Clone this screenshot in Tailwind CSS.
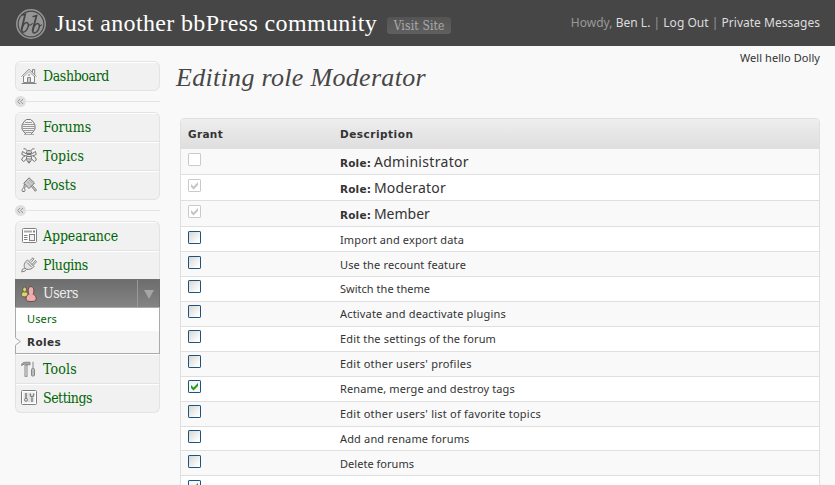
<!DOCTYPE html>
<html lang="en">
<head>
<meta charset="utf-8">
<title>Editing role Moderator</title>
<script src="https://cdn.jsdelivr.net/npm/@tailwindcss/browser@4"></script>
</head>
<body class="h-[485px] overflow-hidden bg-[#f9f9f9] text-[#333] font-['Noto_Sans',sans-serif] text-[11px]">
<svg class="absolute size-0">
  <defs>
    <linearGradient id="g" x1="0" y1="0" x2="1" y2="1"><stop offset="0.1" stop-color="#d9d9d5"/><stop offset="0.8" stop-color="#fdfdfd"/></linearGradient>
    <symbol id="off" viewBox="0 0 13 13"><rect x=".5" y=".5" width="12" height="12" rx=".6" fill="url(#g)" stroke="#1c5180"/></symbol>
    <symbol id="on" viewBox="0 0 13 13"><rect x=".5" y=".5" width="12" height="12" rx=".6" fill="#f6f6f4" stroke="#1c5180"/><path d="M3 5v3l2.500 2.500L10 6V3L5.500 7.500z" fill="#21a121"/></symbol>
    <symbol id="dis" viewBox="0 0 13 13"><rect x=".5" y=".5" width="12" height="12" rx=".6" fill="#fff" stroke="#cacac8"/></symbol>
    <symbol id="dison" viewBox="0 0 13 13"><rect x=".5" y=".5" width="12" height="12" rx=".6" fill="#fff" stroke="#cacac8"/><path d="M3 5v3l2.500 2.500L10 6V3L5.500 7.500z" fill="#c5c5c3"/></symbol>
  </defs>
</svg>

<header class="flex h-[46px] items-center bg-[#464646] pl-4 pr-[15px]">
  <svg class="mt-[2px] size-[30px] shrink-0" viewBox="0 0 30 30"><circle cx="15" cy="15" r="14.200" fill="none" stroke="#969696" stroke-width="1.500"/><circle cx="15" cy="15" r="12.300" fill="#969696"/><g fill="none" stroke="#464646" stroke-linecap="round"><path d="M6 6l3.200-.8L5.600 20.500" stroke-width="1.800"/><path d="M5.700 20.500c1.500-7.500 6.500-8.500 6.700-4.800.2 3.300-2.700 7.500-5.100 7.500-1.100 0-1.600-1.200-1.600-2.700" stroke-width="1.500"/><path d="M17.300 7.500l3.200-.8L16.600 21.500" stroke-width="1.800"/><path d="M16.700 21.500c1.500-7.500 6.500-8.500 6.700-4.800.2 3.300-2.700 7.300-5.100 7.300-1.100 0-1.600-1.100-1.600-2.500" stroke-width="1.500"/><path d="M12.500 15.800c1.200.6 2.500.2 3.800-1.200M23.600 16.500c.8.300 1.400 0 2-.6" stroke-width="1.100"/></g></svg>
  <h1 class="ml-[9px] whitespace-nowrap font-['Liberation_Serif',serif] text-[24px] leading-[30px] tracking-[.36px] text-white">Just another bbPress community</h1>
  <a class="ml-[10px] mt-[5px] flex h-[17px] w-16 items-center justify-center whitespace-nowrap rounded-[3px] bg-gradient-to-b from-[#545454] to-[#606060] font-['DejaVu_Serif_Condensed','DejaVu_Serif',serif] text-[12px] tracking-[.16px] text-[#aaa]">Visit Site</a>
  <p class="ml-auto whitespace-nowrap text-[12px] leading-[18px] tracking-[.02px] text-[#999]">Howdy, <a class="text-[#ddd]">Ben L.</a> | <a class="text-[#ddd]">Log Out</a> | <a class="text-[#ddd]">Private Messages</a></p>
</header>

<div class="flex">
  <nav class="ml-[15px] mt-[15px] w-[145px] shrink-0 font-['DejaVu_Serif_Condensed','DejaVu_Serif',serif] text-[14px] text-[#006505]">
    <div class="overflow-hidden rounded-[6px] border border-[#e3e3e3] bg-[#f1f1f1]">
      <a class="flex h-7 items-center gap-[6px] border-t border-white pl-[5px]"><svg class="mb-px size-4" viewBox="0 0 16 16" fill="none" stroke="#888"><path d="M.7 8.500L8 1.200l7.300 7.300"/><path d="M2.500 8v6.500h11V8" fill="#f8f8f8"/><path d="M3 8.200L8 3.500l5 4.700" stroke="#aaa"/><path d="M11.500 4.500V1.500h2.200v5.200M.5 15.500h15"/><path d="M6.500 14.500v-5h3v5z" fill="#ccc"/><path d="M7.300 7h1.400" stroke-width="1.500"/></svg><span class="tracking-[-.38px]">Dashboard</span></a>
    </div>
    <div class="flex h-[21px] items-center"><svg class="size-[11px]" viewBox="0 0 11 11"><circle cx="5.500" cy="5.500" r="5.500" fill="#dfdfdf"/><path d="M5 3L2.700 5.500 5 8M8 3L5.700 5.500 8 8" fill="none" stroke="#999"/></svg><span class="h-px grow bg-[#e3e3e3]"></span></div>
    <div class="overflow-hidden rounded-[6px] border border-[#e3e3e3] bg-[#f1f1f1]">
      <a class="flex h-7 items-center gap-[6px] border-t border-white pl-[5px]"><svg class="mb-px size-4" viewBox="0 0 16 16" fill="none" stroke="#777"><path d="M5.500 .5h4l2.500 2 2 3.500v4l-2 3-2.500 2.500h-4L3 13 1 10V6l2-3.500z" fill="#f3f3f3"/><path d="M4 3.500h7M2 5.500h11M1 7.500h13M1.500 9.500h12M2.500 11.500h10M4.500 13.500h6" stroke="#999"/><path d="M3 15.500h10" stroke="#aaa"/></svg><span>Forums</span></a>
      <a class="flex h-[29px] items-center gap-[6px] border-t border-[#e3e3e3] pl-[5px] shadow-[inset_0_1px_0_#fff]"><svg class="mb-px size-4" viewBox="0 0 16 16" fill="none" stroke="#777"><path d="M2.500 .8h2l1.500 2M13.500 .8h-2L10 2.800"/><path d="M5.500 5.500V3.800C6.500 2 9.500 2 10.500 3.800v1.700z" fill="#ccc"/><path d="M5.500 6L1.500 3.500.8 6.500 4 7.800M10.500 6l4-2.500.7 3L12 7.800"/><path d="M5 7.500L1.500 9.500.7 12l2 1.500L5.500 11M11 7.500l3.500 2 .8 2.500-2 1.500L10.500 11"/><path d="M6 6.500h4l.7 5L8 15.300 5.300 11.500z" fill="#eee"/><path d="M6 8.500h4M5.500 11h5M6.500 13.300h3" stroke-width="1.100"/></svg><span class="tracking-[.08px]">Topics</span></a>
      <a class="flex h-[29px] items-center gap-[6px] border-t border-[#e3e3e3] pl-[5px] shadow-[inset_0_1px_0_#fff]"><svg class="mb-px size-4" viewBox="0 0 16 16" fill="none" stroke="#777"><path d="M8 .8L13.500 6 8 11.500 2.800 6.200z" fill="#ccc"/><path d="M6 4.500l4 4M8 3l3.500 3.500" stroke="#aaa"/><path d="M10.300 9.300l4 5 1.200-1.200-4-4.600z" fill="#ddd"/><path d="M3.500 7L2.800 10.500c-1.500 1-2.300 3-1.300 4h2c1-1.200.3-2.700-.3-3.500L5.500 9"/></svg><span class="tracking-[-.09px]">Posts</span></a>
    </div>
    <div class="flex h-[21px] items-center"><svg class="size-[11px]" viewBox="0 0 11 11"><circle cx="5.500" cy="5.500" r="5.500" fill="#dfdfdf"/><path d="M5 3L2.700 5.500 5 8M8 3L5.700 5.500 8 8" fill="none" stroke="#999"/></svg><span class="h-px grow bg-[#e3e3e3]"></span></div>
    <div class="overflow-hidden rounded-t-[6px] border border-b-0 border-[#e3e3e3] bg-[#f1f1f1]">
      <a class="flex h-7 items-center gap-[6px] border-t border-white pl-[5px]"><svg class="mb-px size-4" viewBox="0 0 16 16" fill="none" stroke="#808080"><rect x="1.500" y=".5" width="14" height="14" rx="1" fill="#fff"/><path d="M3 3.500h8" stroke-width="2" stroke="#aaa"/><path d="M12 3.500h2" stroke-width="2" stroke="#808080"/><path d="M3 7.500h3.500M3 9.500h3.500M3 11.500h3.500"/><rect x="8.500" y="6.500" width="5" height="6" fill="#f1f1f1"/></svg><span class="tracking-[-.13px]">Appearance</span></a>
      <a class="flex h-[29px] items-center gap-[6px] border-t border-[#e3e3e3] pl-[5px] shadow-[inset_0_1px_0_#fff]"><svg class="mb-px size-4" viewBox="0 0 16 16" fill="none" stroke="#808080"><path d="M6.500 3l6.500 6.500c-1.500 2.500-5 3.500-8 2.500L3.500 10.500C2.500 7.500 4 4.500 6.500 3z" fill="#e5e5e5"/><path d="M8.500 4L12 .8l1 1-3 3.700M11 7.500l3.500-4 1 1.200-3.500 4M4 11L1.200 12.500.8 15M5.500 12.300L4 14l-3.200 1M6 5.500l4.500 4.500"/></svg><span class="tracking-[-.33px]">Plugins</span></a>
    </div>
    <a class="flex h-7 items-center border-x border-t border-[#707070] bg-gradient-to-b from-[#6d6d6d] to-[#848484] pl-[5px] text-white"><svg class="mr-[6px] size-4" viewBox="0 0 16 16"><g fill="#d9d27a" stroke="#5c5423" stroke-width=".8"><path d="M.5 8.500C.5 6.300 1.700 5.600 3.500 5.600s3.500.7 3.500 2.900-1.500 2.300-3.500 2.300S.5 10.500.5 8.500z"/><ellipse cx="3.600" cy="3.600" rx="1.900" ry="2.500"/></g><path d="M5 12.800c0-3 1.700-5 5-5s5.200 2 5.200 5c0 2.200-2 2.700-5.200 2.700s-5-.5-5-2.700z" fill="#e8b0b0" stroke="#6b3430" stroke-width=".8"/><ellipse cx="10" cy="4.700" rx="2.800" ry="4.100" fill="#e8b0b0" stroke="#6b3430" stroke-width=".8"/><path d="M8.300 7.200h3.400v2.500H8.300z" fill="#e8b0b0"/></svg><span class="tracking-[-.4px] text-[#eee]">Users</span><span class="ml-auto flex h-full w-[22px] items-center justify-center border-l border-[#999]"><svg class="mt-[2px] h-[9px] w-[10px]" viewBox="0 0 10 9"><path d="M0 0h10L5 9z" fill="#a5a5a5"/></svg></span></a>
    <div class="relative border border-[#aaa] bg-white font-['Noto_Sans',sans-serif] text-[11px]">
      <a class="flex h-[23px] items-center pl-[11px] tracking-[.13px]">Users</a>
      <a class="flex h-[22px] items-center bg-[#f5f5f5] pl-[11px] pt-[2px] font-['DejaVu_Sans',sans-serif] text-[10.5px] font-bold tracking-[.34px] text-[#333]">Roles</a>
      <svg class="absolute -left-px top-[29px] h-[9px] w-[7px]" viewBox="0 0 7 9"><path d="M0 .5L6 4.500 0 8.500z" fill="#f9f9f9"/><path d="M.5 1l5 3.500L.5 8" fill="none" stroke="#aaa"/></svg>
    </div>
    <div class="overflow-hidden rounded-b-[6px] border border-t-0 border-[#e3e3e3] bg-[#f1f1f1]">
      <a class="flex h-[29px] items-center gap-[6px] border-t border-white pl-[5px]"><svg class="mb-px size-4" viewBox="0 0 16 16" fill="none" stroke="#888"><path d="M.5 4.500c0-2.500 2-3.200 4-3.200h4.500v2.500H6.500L3.500 3z" fill="#aaa"/><rect x="4" y="4" width="2" height="11.300" fill="#eee"/><path d="M12 .8v7"/><rect x="10.500" y="7.500" width="3" height="7.500" rx="1" fill="#bbb"/></svg><span class="tracking-[.2px]">Tools</span></a>
      <a class="flex h-[29px] items-center gap-[6px] border-t border-[#e3e3e3] pl-[5px] shadow-[inset_0_1px_0_#fff]"><svg class="mb-px size-4" viewBox="0 0 16 16" fill="none" stroke="#808080"><rect x=".5" y=".5" width="15" height="14" rx="1" fill="#fff"/><rect x="2.500" y="2.500" width="11" height="10" fill="#e3e3e3" stroke="none"/><path d="M5 3v5M11 7.500v4.500" stroke-width="1.500"/><circle cx="5" cy="9.800" r="1.500"/><path d="M9.300 3.500v1.300c0 2.500 3.400 2.500 3.400 0V3.500" stroke-width="1.300"/></svg><span class="tracking-[-.48px]">Settings</span></a>
    </div>
  </nav>

  <main class="ml-5 w-[640px] shrink-0">
    <p class="flex h-[18px] items-end justify-end whitespace-nowrap leading-[12px] tracking-[.07px]">Well hello Dolly</p>
    <h2 class="-ml-1 h-[54px] whitespace-nowrap font-['Liberation_Serif',serif] text-[26px] italic leading-[28px] tracking-[.31px] text-[#464646]">Editing role Moderator</h2>
    <div class="overflow-hidden rounded-t-[4px] border border-[#dfdfdf] bg-white">
      <div class="flex h-[30px] items-center bg-gradient-to-b from-[#eee] to-[#dedede] pl-[7px] pt-[2px] font-['DejaVu_Sans',sans-serif] text-[10.5px] font-bold"><span class="w-[152px] tracking-[.32px]">Grant</span><span class="tracking-[.5px]">Description</span></div>
      <div class="flex h-[26px] items-start border-b border-[#dfdfdf] bg-[#f9f9f9] pl-[7px] pt-1"><svg class="mr-[139px] size-[13px]"><use href="#dis"/></svg><span class="leading-[18px]"><b class="font-['DejaVu_Sans',sans-serif] text-[10.5px] tracking-[.16px]">Role:</b> <span class="text-[14px] tracking-[.31px]">Administrator</span></span></div>
      <div class="flex h-[26px] items-start border-b border-[#dfdfdf] pl-[7px] pt-1"><svg class="mr-[139px] size-[13px]"><use href="#dison"/></svg><span class="leading-[18px]"><b class="font-['DejaVu_Sans',sans-serif] text-[10.5px] tracking-[.16px]">Role:</b> <span class="text-[14px] tracking-[.18px]">Moderator</span></span></div>
      <div class="flex h-[26px] items-start border-b border-[#dfdfdf] bg-[#f9f9f9] pl-[7px] pt-1"><svg class="mr-[139px] size-[13px]"><use href="#dison"/></svg><span class="leading-[18px]"><b class="font-['DejaVu_Sans',sans-serif] text-[10.5px] tracking-[.16px]">Role:</b> <span class="text-[14px]">Member</span></span></div>
      <div class="flex h-[25px] items-start border-b border-[#dfdfdf] pl-[7px] pt-1"><svg class="mr-[139px] size-[13px]"><use href="#off"/></svg><span class="leading-[18px] tracking-[.13px]">Import and export data</span></div>
      <div class="flex h-[25px] items-start border-b border-[#dfdfdf] bg-[#f9f9f9] pl-[7px] pt-1"><svg class="mr-[139px] size-[13px]"><use href="#off"/></svg><span class="leading-[18px] tracking-[.15px]">Use the recount feature</span></div>
      <div class="flex h-[25px] items-start border-b border-[#dfdfdf] pl-[7px] pt-[3px]"><svg class="mr-[139px] size-[13px]"><use href="#off"/></svg><span class="leading-[18px] tracking-[.02px]">Switch the theme</span></div>
      <div class="flex h-[25px] items-start border-b border-[#dfdfdf] bg-[#f9f9f9] pl-[7px] pt-[3px]"><svg class="mr-[139px] size-[13px]"><use href="#off"/></svg><span class="leading-[18px] tracking-[.17px]">Activate and deactivate plugins</span></div>
      <div class="flex h-[25px] items-start border-b border-[#dfdfdf] pl-[7px] pt-[3px]"><svg class="mr-[139px] size-[13px]"><use href="#off"/></svg><span class="leading-[18px] tracking-[.15px]">Edit the settings of the forum</span></div>
      <div class="flex h-[25px] items-start border-b border-[#dfdfdf] bg-[#f9f9f9] pl-[7px] pt-[3px]"><svg class="mr-[139px] size-[13px]"><use href="#off"/></svg><span class="leading-[18px] tracking-[.23px]">Edit other users' profiles</span></div>
      <div class="flex h-[25px] items-start border-b border-[#dfdfdf] pl-[7px] pt-[3px]"><svg class="mr-[139px] size-[13px]"><use href="#on"/></svg><span class="leading-[18px] tracking-[.12px]">Rename, merge and destroy tags</span></div>
      <div class="flex h-[25px] items-start border-b border-[#dfdfdf] bg-[#f9f9f9] pl-[7px] pt-[3px]"><svg class="mr-[139px] size-[13px]"><use href="#off"/></svg><span class="leading-[18px] tracking-[.23px]">Edit other users' list of favorite topics</span></div>
      <div class="flex h-6 items-start border-b border-[#dfdfdf] pl-[7px] pt-[3px]"><svg class="mr-[139px] size-[13px]"><use href="#off"/></svg><span class="leading-[18px] tracking-[.16px]">Add and rename forums</span></div>
      <div class="flex h-[25px] items-start border-b border-[#dfdfdf] bg-[#f9f9f9] pl-[7px] pt-1"><svg class="mr-[139px] size-[13px]"><use href="#off"/></svg><span class="leading-[18px] tracking-[.03px]">Delete forums</span></div>
      <div class="flex h-[25px] items-start pl-[7px] pt-1"><svg class="mr-[139px] size-[13px]"><use href="#on"/></svg></div>
    </div>
  </main>
</div>
</body>
</html>
